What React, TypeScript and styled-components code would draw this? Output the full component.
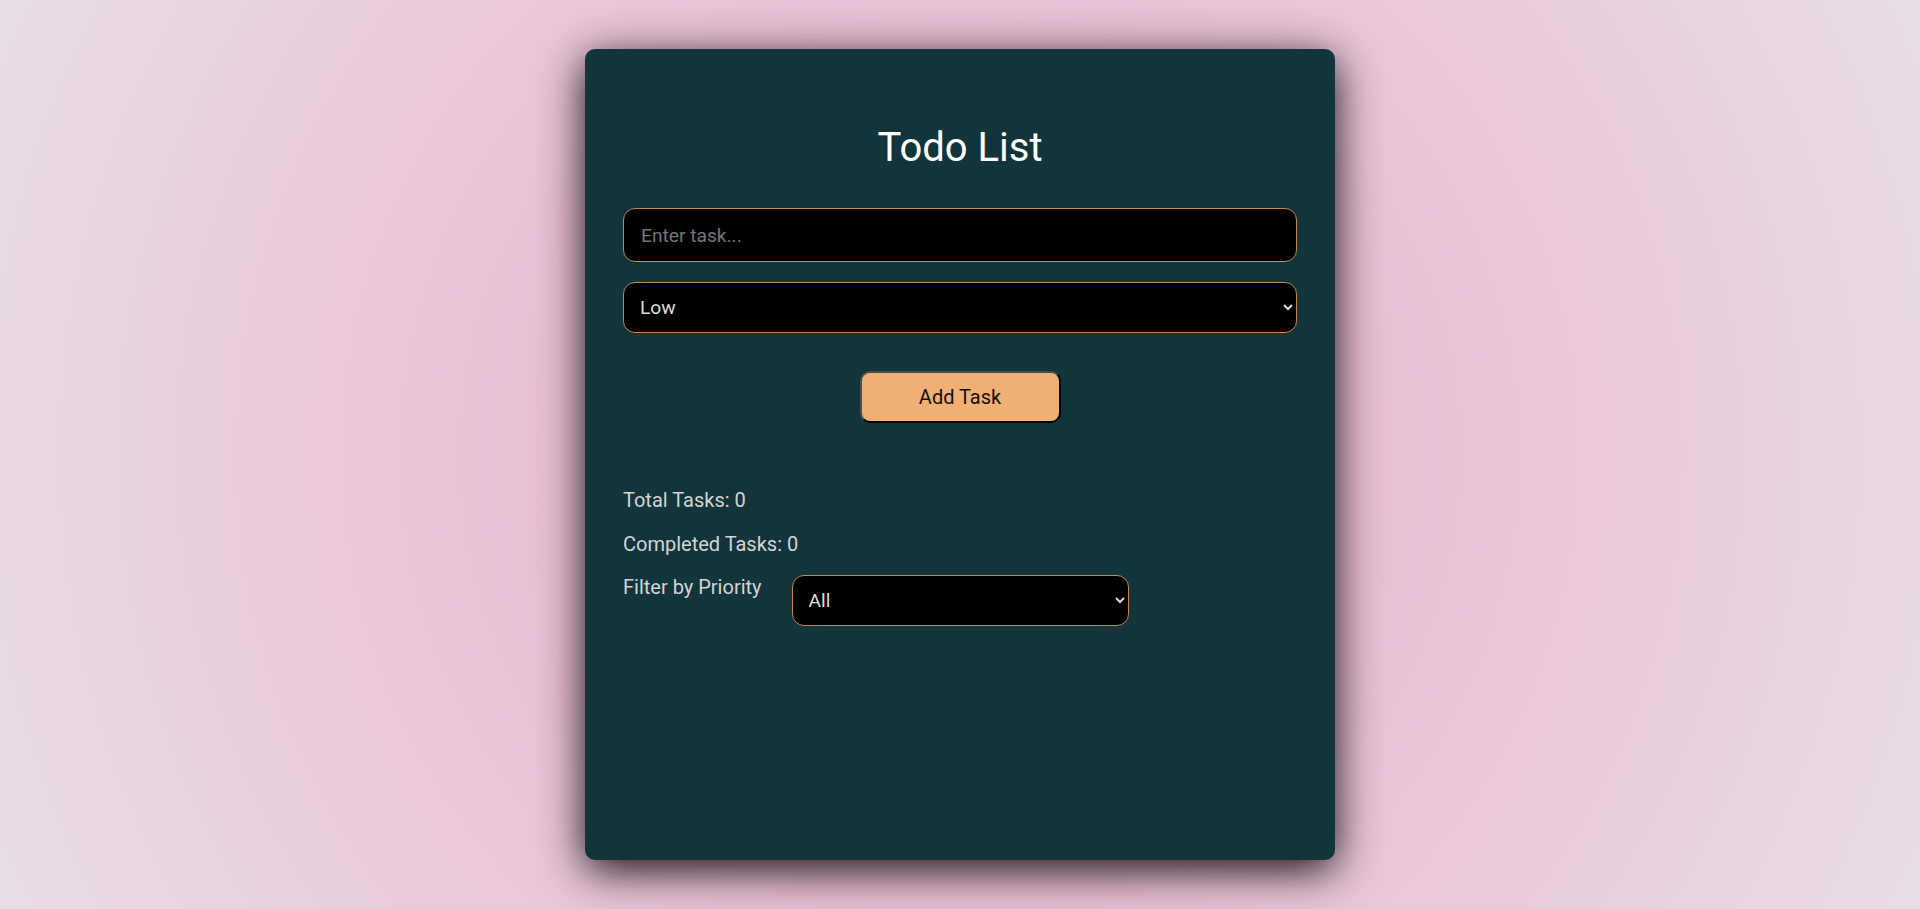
import React, { useState } from "react";
import styled, { createGlobalStyle } from "styled-components";

const GlobalStyle = createGlobalStyle`
  html, body {
    margin: 0;
    padding: 0;
  }
  body {
    font-family: Roboto, "Noto Sans", Arial, sans-serif;
    background: radial-gradient(circle at center, #e8bcd2 0%, #e9bfd4 42%, #e8dde6 100%);
    min-height: 100vh;
  }
  * {
    box-sizing: border-box;
  }
`;

const Page = styled.div`
  height: 100vh;
  display: flex;
  align-items: center;
  justify-content: center;
`;

const Card = styled.main`
  width: 750px;
  height: 811px;
  background: #12353c;
  border-radius: 10px;
  box-shadow: 0 10px 44px rgba(0, 0, 0, 0.92);
  padding: 0 38px;
  display: flex;
  flex-direction: column;
`;

const Title = styled.h1`
  margin: 75px 0 37px;
  font-size: 40px;
  font-weight: 400;
  line-height: normal;
  color: #ffffff;
  text-align: center;
`;

const TaskInput = styled.input`
  height: 54px;
  width: 100%;
  border: 1px solid #c08a57;
  border-radius: 12px;
  background: #000;
  color: #dddddd;
  font-family: Roboto, Arial, sans-serif;
  font-size: 19.2px;
  padding: 0 17px;
  outline: none;
  &::placeholder {
    color: #767676;
  }
`;

const Select = styled.select<{ $half?: boolean; $top?: number }>`
  height: 51px;
  width: ${(p) => (p.$half ? "50%" : "100%")};
  margin-top: ${(p) => p.$top ?? 0}px;
  border: 1px solid #c08a57;
  border-radius: 12px;
  background: #000;
  color: #dddddd;
  font-family: Roboto, Arial, sans-serif;
  font-size: 19.2px;
  padding: 0 17px 0 12px;
  outline: none;
`;

const AddButton = styled.button`
  align-self: center;
  margin-top: 38px;
  width: 201px;
  height: 52px;
  background: #f0b073;
  color: #111111;
  font-family: Roboto, Arial, sans-serif;
  font-size: 20px;
  border: 2px solid;
  border-color: #4d4d4d #000 #000 #4d4d4d;
  border-radius: 10px;
  cursor: pointer;
`;

const Stats = styled.section`
  margin-top: 66px;
  display: flex;
  flex-direction: column;
`;

const StatLine = styled.p`
  margin: 0 0 21px;
  font-size: 20px;
  line-height: 22.5px;
  color: #d4d4d4;
`;

const FilterRow = styled.div`
  display: flex;
  align-items: flex-start;
  margin-top: -1px;
`;

const FilterLabel = styled.label`
  font-size: 20px;
  line-height: 22.5px;
  color: #d4d4d4;
  margin-top: 1px;
  margin-right: 30px;
  white-space: nowrap;
`;

export default function App() {
  const [task, setTask] = useState("");
  const [priority, setPriority] = useState("Low");
  const [filter, setFilter] = useState("All");

  return (
    <>
      <GlobalStyle />
      <Page>
        <Card>
          <Title>Todo List</Title>
          <TaskInput
            placeholder="Enter task..."
            value={task}
            onChange={(e) => setTask(e.target.value)}
          />
          <Select $top={20} value={priority} onChange={(e) => setPriority(e.target.value)}>
            <option>Low</option>
            <option>Medium</option>
            <option>High</option>
          </Select>
          <AddButton>Add Task</AddButton>
          <Stats>
            <StatLine>Total Tasks: 0</StatLine>
            <StatLine>Completed Tasks: 0</StatLine>
            <FilterRow>
              <FilterLabel htmlFor="filter">Filter by Priority</FilterLabel>
              <Select
                id="filter"
                $half
                value={filter}
                onChange={(e) => setFilter(e.target.value)}
              >
                <option>All</option>
                <option>Low</option>
                <option>Medium</option>
                <option>High</option>
              </Select>
            </FilterRow>
          </Stats>
        </Card>
      </Page>
    </>
  );
}
